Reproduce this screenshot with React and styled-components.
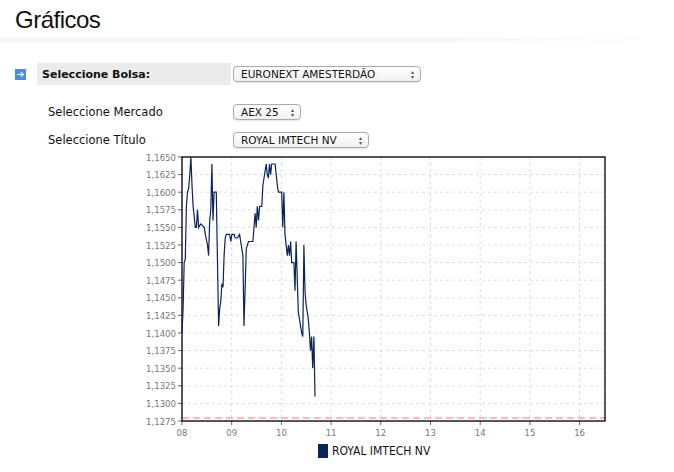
import React from "react";
import styled, { createGlobalStyle } from "styled-components";

const G = createGlobalStyle`
  body { margin: 0; background: #fff; font-family: "DejaVu Sans", Verdana, sans-serif; }
`;
const Page = styled.div`width: 674px; height: 472px; overflow: hidden; position: relative;`;
const Title = styled.h1`
  margin: 0; padding: 6px 0 0 15px; height: 36px; box-sizing: border-box;
  font: 400 24px "Liberation Sans", Arial, sans-serif; color: #111; letter-spacing: -0.5px;
`;
const Rule = styled.div`
  height: 6px; margin-top: 2px;
  background: linear-gradient(to bottom, #f0f0f0, #fff);
  -webkit-mask: linear-gradient(to right, #000 60%, transparent);
`;
const Row = styled.div`
  display: flex; align-items: center; margin-top: ${p => p.mt}px; padding-left: ${p => p.pl}px; height: ${p => p.h}px;
`;
const Icon = styled.div`
  width: 11px; height: 11px; background: #4a8fd8; color: #fff; font-size: 9px; line-height: 11px;
  text-align: center; margin-right: 11px;
`;
const LabelBox = styled.div`
  width: 194px; box-sizing: border-box; height: 22px; background: #ebebeb; display: flex; align-items: center;
  padding-left: 5px; font-size: 11px; font-weight: bold; color: #111; margin-right: 2px;
`;
const Label = styled.div`width: 185px; font-size: 11.5px; color: #111;`;
const Select = styled.div`
  width: ${p => p.w}px; height: 16px; box-sizing: border-box; border: 1px solid #aaa; border-radius: 4px;
  background: linear-gradient(#fff, #f1f1f1); display: flex; align-items: center; justify-content: space-between;
  padding: 0 6px 0 7px; font-size: 10.5px; color: #111; white-space: nowrap;
  box-shadow: 0 1px 1px rgba(0,0,0,0.1);
`;
const Arrows = styled.span`font-size: 6px; line-height: 5px; color: #555; display: flex; flex-direction: column;`;
const Chart = styled.svg`display: block; position: absolute; left: 130px; top: 150px;`;
const Legend = styled.div`
  position: absolute; left: 318px; top: 444px; display: flex; align-items: center; gap: 4px;
  font: 12px "DejaVu Sans Condensed", "DejaVu Sans", sans-serif; color: #111;
`;
const Swatch = styled.div`width: 10px; height: 14px; background: #0b2358;`;

const pts = [[182,1.14],[183,1.1435],[184,1.150],[185,1.1505],[186,1.158],[187,1.160],[188,1.1605],[189,1.1625],[190,1.165],[191,1.161],[192,1.158],[194,1.155],[195,1.155],[196,1.1575],[197,1.155],[199,1.1555],[202,1.155],[203,1.154],[205,1.1525],[206,1.151],[207,1.156],[208,1.1575],[209,1.164],[210,1.156],[211,1.160],[213,1.160],[214,1.150],[215,1.141],[216,1.1435],[217,1.1445],[218,1.147],[219,1.1465],[220,1.151],[221,1.1535],[222,1.154],[225,1.154],[226,1.153],[227,1.154],[229,1.154],[230,1.1535],[232,1.1535],[234,1.154],[235,1.153],[237,1.151],[238,1.141],[240,1.152],[242,1.153],[245,1.153],[246,1.153],[248,1.157],[249,1.155],[250,1.158],[251,1.156],[252,1.158],[254,1.158],[255,1.161],[257,1.163],[258,1.164],[259,1.1625],[260,1.162],[261,1.164],[262,1.1625],[263,1.164],[266,1.164],[268,1.161],[269,1.160],[272,1.160],[273,1.155],[274,1.160],[275,1.154],[277,1.151],[278,1.1525],[279,1.151],[280,1.153],[281,1.150],[283,1.150],[284,1.146],[285,1.153],[286,1.148],[287,1.143],[288,1.142],[290,1.140],[291,1.1395],[292,1.1525],[293,1.146],[294,1.144],[296,1.142],[297,1.140],[298,1.1375],[299,1.1395],[300,1.135],[301,1.1395],[302,1.131]];
const py = p => 157 + (1.165 - p) / 0.0375 * 264;
const xs = [182, 231.7, 281.4, 331.1, 380.8, 430.5, 480.2, 529.9, 579.6];

export default function App() {
  const ticks = Array.from({ length: 16 }, (_, i) => 1.1275 + i * 0.0025);
  const d = pts.map(([x, p], i) => `${i ? "L" : "M"}${(182 + (x - 182) * 1.108).toFixed(1)},${py(p).toFixed(1)}`).join(" ");
  return (
    <Page>
      <G />
      <Title>Gráficos</Title>
      <Rule />
      <Row mt={19} pl={15} h={22}>
        <Icon>➔</Icon>
        <LabelBox>Seleccione Bolsa:</LabelBox>
        <Select w={188}>EURONEXT AMESTERDÃO<Arrows>▴<br/>▾</Arrows></Select>
      </Row>
      <Row mt={18} pl={48} h={18}>
        <Label>Seleccione Mercado</Label>
        <Select w={68}>AEX 25<Arrows>▴<br/>▾</Arrows></Select>
      </Row>
      <Row mt={10} pl={48} h={18}>
        <Label>Seleccione Título</Label>
        <Select w={136}>ROYAL IMTECH NV<Arrows>▴<br/>▾</Arrows></Select>
      </Row>
      <Chart width="490" height="292" viewBox="130 150 490 292">
        {ticks.map(t => (
          <g key={t}>
            <line x1="182" x2="605" y1={py(t)} y2={py(t)} stroke="#ddd" strokeDasharray="3 3" />
            <line x1="178" x2="182" y1={py(t)} y2={py(t)} stroke="#666" />
            <text x="176" y={py(t) + 3.5} fontSize="9.5" fill="#777" textAnchor="end" fontFamily="DejaVu Sans Condensed, DejaVu Sans">{t.toFixed(4).replace(".", ",")}</text>
          </g>
        ))}
        {xs.map((x, i) => (
          <g key={i}>
            <line x1={x} x2={x} y1="157" y2="421" stroke="#ddd" strokeDasharray="3 3" />
            <line x1={x} x2={x} y1="421" y2="425" stroke="#666" />
            <text x={x} y="436" fontSize="9.5" fill="#777" textAnchor="middle" fontFamily="DejaVu Sans Condensed, DejaVu Sans">{String(8 + i).padStart(2, "0")}</text>
          </g>
        ))}
        <line x1="182" x2="605" y1="418" y2="418" stroke="#ff7070" strokeDasharray="7 4" />
        <rect x="182" y="157" width="423" height="264" fill="none" stroke="#000" strokeWidth="1.3" />
        <path d={d} fill="none" stroke="#0b2358" strokeWidth="1.2" />
      </Chart>
      <Legend><Swatch />ROYAL IMTECH NV</Legend>
    </Page>
  );
}
